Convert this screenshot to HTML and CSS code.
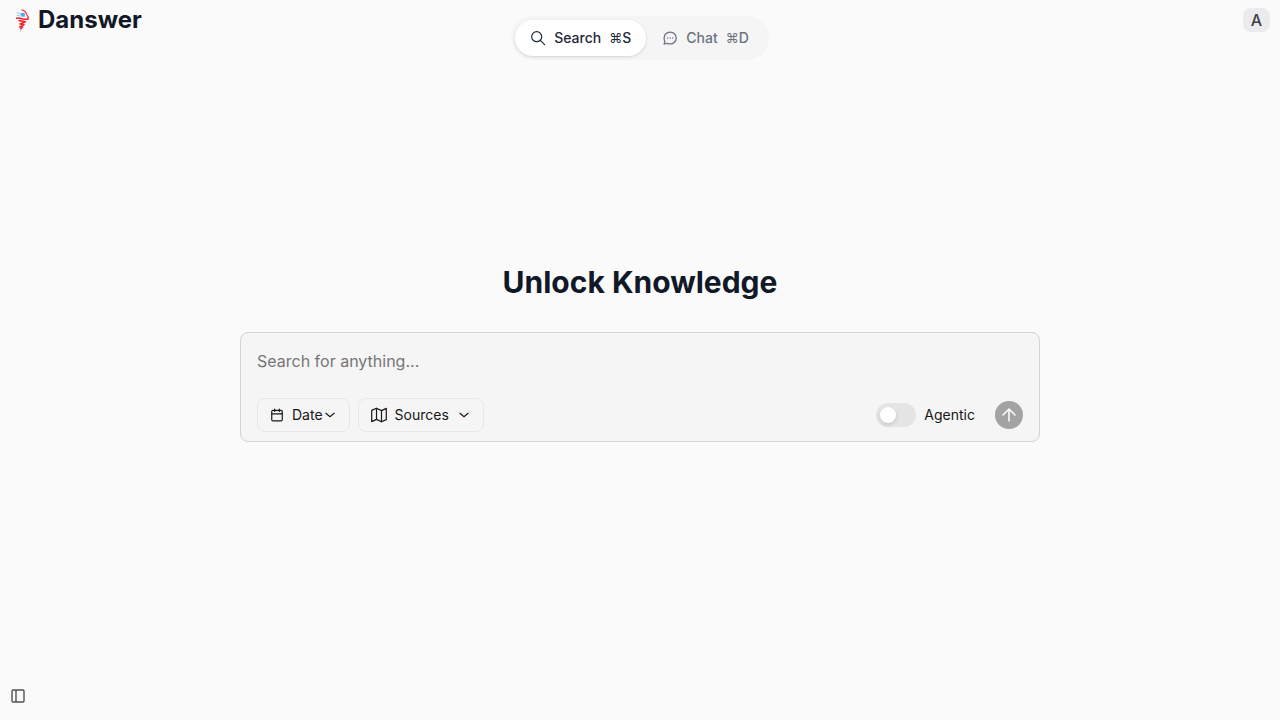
FILE: index.html
```html
<!DOCTYPE html>
<html lang="en">
<head>
<meta charset="utf-8">
<meta name="viewport" content="width=device-width, initial-scale=1">
<title>Danswer</title>
<link rel="stylesheet" href="styles.css">
</head>
<body>
<div class="page">
  <header class="header">
    <a class="brand" href="#">
      <svg class="brand-mark" viewBox="0 0 14 24" fill="none" stroke-linecap="round" stroke-linejoin="round" aria-hidden="true">
        <path d="M1 4.800 5 6M1.200 7.400 5 8" stroke="#9fd2f7" stroke-width="1.200"/>
        <path d="M4.600 5h4.200v3.800H5.600z" fill="#4aabec"/>
        <path d="M6 1.800C8.600 2.600 10.600 4.600 11.200 7.800" stroke="#f5414a" stroke-width="1.300"/>
        <path d="M.4 10.200C4 9.200 8 12.200 12 11.200V8.800" stroke="#f32530" stroke-width="1.500"/>
        <path d="M3.200 12.600 9.400 13.800 4 16l4 .6-4.200 2.400 2.800.2L4.600 21" stroke="#f32530" stroke-width="1.600"/>
        <path d="M4.600 22.200v1" stroke="#a9d4f4" stroke-width="1"/>
      </svg>
      <span>Danswer</span>
    </a>
    <nav class="modes" aria-label="Mode">
      <button class="mode mode-active" type="button" aria-pressed="true">
        <svg class="icon" viewBox="0 0 16 16" fill="none" stroke="currentColor" stroke-width="1.200" stroke-linecap="round" aria-hidden="true"><circle cx="6.700" cy="6.700" r="5"/><path d="m10.400 10.400 4.200 4.200"/></svg>
        <span>Search</span><span><span class="command">⌘</span>S</span>
      </button>
      <button class="mode" type="button" aria-pressed="false">
        <svg class="icon" viewBox="0 0 16 16" fill="none" stroke="currentColor" stroke-width="1.300" stroke-linecap="round" stroke-linejoin="round" aria-hidden="true"><path d="M8.200 2.100c3.400 0 6 2.600 6 5.900s-2.600 5.900-6 5.900c-.9 0-1.800-.2-2.600-.6-.9.500-2 .8-3.700.6.600-.6 1-1.400 1-2.200C2.300 10.600 2.100 9.300 2.100 8c0-3.300 2.700-5.900 6.100-5.900Z"/><path d="M5.500 8h.1M8.100 8h.1M10.700 8h.1"/></svg>
        <span>Chat</span><span><span class="command">⌘</span>D</span>
      </button>
    </nav>
    <button class="avatar" type="button" aria-label="Account A">A</button>
  </header>

  <main class="main">
    <h1 class="title">Unlock Knowledge</h1>
    <form class="search-box">
      <input class="query" type="text" placeholder="Search for anything..." aria-label="Search">
      <div class="controls">
        <button class="filter" type="button">
          <svg class="icon icon-date" viewBox="0 0 24 24" fill="none" stroke="currentColor" stroke-width="2" stroke-linecap="round" stroke-linejoin="round" aria-hidden="true"><rect x="3" y="4" width="18" height="18" rx="2"/><path d="M8 2v4M16 2v4M3 10h18"/></svg>
          <span class="filter-date">Date<svg class="chevron" viewBox="0 0 24 24" fill="none" stroke="currentColor" stroke-width="2" stroke-linecap="round" stroke-linejoin="round" aria-hidden="true"><path d="m5 9 7 6 7-6"/></svg></span>
        </button>
        <button class="filter" type="button">
          <svg class="icon" viewBox="0 0 16 16" fill="none" stroke="currentColor" stroke-width="1.200" stroke-linecap="round" stroke-linejoin="round" aria-hidden="true"><path d="M.7 3.400 5.500 1.200l5 2.400 4.800-2.200v11.200l-4.800 2.200-5-2.400-4.800 2.200ZM5.500 1.200v11.200M10.500 3.600v11.200"/></svg>
          <span>Sources</span>
          <svg class="chevron" viewBox="0 0 24 24" fill="none" stroke="currentColor" stroke-width="2" stroke-linecap="round" stroke-linejoin="round" aria-hidden="true"><path d="m5 9 7 6 7-6"/></svg>
        </button>
        <label class="agentic"><input class="switch" type="checkbox" role="switch">Agentic</label>
        <button class="send" type="submit" aria-label="Send">
          <svg class="send-icon" viewBox="0 0 18 18" fill="none" stroke="currentColor" stroke-width="1.500" stroke-linecap="round" stroke-linejoin="round" aria-hidden="true"><path d="M9 15V3M3 9l6-6 6 6"/></svg>
        </button>
      </div>
    </form>
  </main>

  <footer class="footer">
    <button class="panel-toggle" type="button" aria-label="Toggle sidebar">
      <svg class="icon" viewBox="0 0 16 16" fill="none" stroke="currentColor" stroke-width="1.400" aria-hidden="true"><rect x="2" y="2" width="12" height="12" rx="1.200"/><path d="M6 2v12"/></svg>
    </button>
  </footer>
</div>
</body>
</html>
```
FILE: styles.css
```css
*, *::before { box-sizing: border-box; }

body {
  margin: 0;
  background: #fafafa;
  color: #171717;
  font-family: Inter, "Liberation Sans", sans-serif;
  font-size: 14px;
  line-height: 20px;
}

button {
  margin: 0;
  padding: 0;
  border: 0;
  background: none;
  color: inherit;
  font: inherit;
  cursor: pointer;
}

svg { display: block; flex: none; }
.icon { width: 16px; height: 16px; }

.page {
  min-height: 100vh;
  display: grid;
  grid-template-rows: auto 1fr auto;
}

.header {
  display: grid;
  grid-template-columns: 1fr auto 1fr;
  align-items: start;
}

.brand {
  display: flex;
  align-items: center;
  gap: 8px;
  padding: 4px 16px;
  color: #111827;
  font-size: 24px;
  font-weight: 700;
  line-height: 32px;
  text-decoration: none;
}
.brand-mark { width: 14px; height: 24px; }

.modes {
  display: flex;
  margin-top: 16px;
  padding: 4px;
  border-radius: 22px;
  background: #f5f5f5;
}
.mode {
  display: flex;
  align-items: center;
  gap: 8px;
  height: 36px;
  padding: 0 16px;
  border-radius: 18px;
  color: #6b7280;
  font-weight: 500;
}
.mode-active {
  padding: 0 15px;
  background: #fff;
  color: #1f2937;
  box-shadow: 0 1px 3px rgba(0, 0, 0, .14);
}
.command { font-size: 13px; font-weight: 400; }

.avatar {
  justify-self: end;
  width: 27px;
  height: 24px;
  margin: 8px 10px 0 0;
  border-radius: 8px;
  background: #ebebee;
  color: #404040;
  font-size: 16px;
  font-weight: 500;
}

.main {
  display: flex;
  flex-direction: column;
  align-items: center;
  justify-content: center;
  padding: 0 16px 42px;
}
.title {
  margin: 0 0 32px;
  color: #111827;
  font-size: 30px;
  font-weight: 700;
  line-height: 36px;
}

.search-box {
  width: 100%;
  max-width: 800px;
  border: 1px solid #d4d4d4;
  border-radius: 8px;
  background: #f5f5f5;
}
.query {
  display: block;
  width: 100%;
  height: 56px;
  padding: 0 16px;
  border: 0;
  outline: 0;
  background: none;
  color: #171717;
  font: inherit;
  font-size: 16px;
}
.query::placeholder { color: #757575; }

.controls {
  display: flex;
  align-items: center;
  gap: 8px;
  padding: 9px 16px;
}
.filter {
  display: flex;
  align-items: center;
  gap: 8px;
  height: 34px;
  padding: 0 12px;
  border: 1px solid #e5e7eb;
  border-radius: 8px;
}
.icon-date { width: 14px; height: 14px; }
.filter-date { display: flex; align-items: center; }
.chevron { width: 14px; height: 14px; }

.agentic {
  display: flex;
  align-items: center;
  gap: 8px;
  margin: 0 12px 0 auto;
}
.switch {
  appearance: none;
  width: 40px;
  height: 24px;
  margin: 0;
  padding: 4px;
  border-radius: 12px;
  background: #e5e5e5;
  cursor: pointer;
}
.switch::before {
  content: "";
  display: block;
  width: 16px;
  height: 16px;
  border-radius: 50%;
  background: #fff;
  box-shadow: 0 2px 4px rgba(0, 0, 0, .14);
}
.switch:checked { background: #737373; }
.switch:checked::before { margin-left: 16px; }

.send {
  display: grid;
  place-items: center;
  width: 28px;
  height: 28px;
  border-radius: 50%;
  background: #a3a3a3;
  color: #fff;
}
.send-icon { width: 18px; height: 18px; }

.footer { padding: 0 10px 16px; }
.panel-toggle { display: block; color: #525252; }
```
